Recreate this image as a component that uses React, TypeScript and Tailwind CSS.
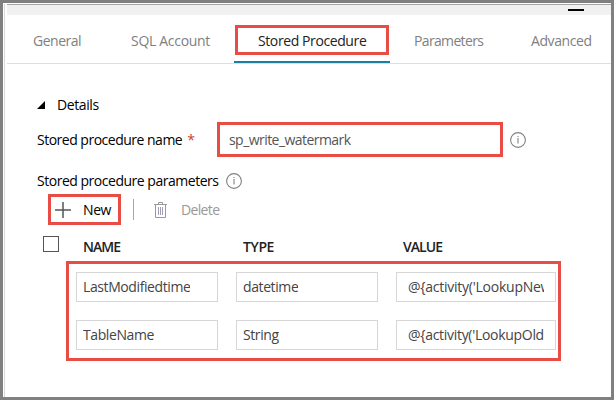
import React from 'react';

function InfoIcon() {
  return (
    <svg width="16" height="16" viewBox="0 0 16 16" className="shrink-0" fill="none">
      <circle cx="8" cy="8" r="7.4" stroke="#808080" strokeWidth="1.1" />
      <path d="M8 6V11.5" stroke="#8c8c8c" strokeWidth="1.2" />
      <path d="M8 4V5" stroke="#8c8c8c" strokeWidth="1.2" />
    </svg>
  );
}

function TrashIcon() {
  return (
    <svg width="13" height="16" viewBox="0 0 13 16" className="shrink-0" fill="none" stroke="#999">
      <path d="M0 2.5H13M4.5 2V.5H8.5V2M1.5 2.5V15.5H11.5V2.5" />
      <path d="M4.5 5V13M6.5 5V13M8.5 5V13" stroke="#a0a0b4" />
    </svg>
  );
}

function Tab({ label, className }: { label: string; className: string }) {
  return <div className={`flex h-[48px] items-center pt-[3px] text-[#808080] ${className}`}>{label}</div>;
}

function Field({ text, className }: { text: string; className: string }) {
  return (
    <div className={`flex h-[30px] items-center border border-[#d6d6d6] text-[#444] ${className}`}>
      <span className="overflow-hidden whitespace-nowrap">{text}</span>
    </div>
  );
}

export default function App() {
  return (
    <div className="h-[400px] w-[614px] overflow-hidden border-3 border-[#808080] bg-white pt-px pl-px font-['Open_Sans','Noto_Sans',sans-serif] text-[14px] leading-5 tracking-[-0.4px] whitespace-nowrap text-black">
      <div className="h-full border-l border-[#d9d9d9] pl-[2px]">
        <div className="flex h-[11px] justify-end border-t border-[#a6a6a6] bg-[#f1f1f1] pt-[4px] pr-[27px]">
          <div className="h-[2px] w-4 bg-black" />
        </div>
        <nav className="flex h-[49px] border-b border-[#dedede]">
          <Tab label="General" className="w-[98px] pl-[26px] tracking-[-0.5px]" />
          <Tab label="SQL Account" className="w-[129px] pl-[26px] tracking-[-0.3px]" />
          <div className="h-[48px] w-[156px] border-b-2 border-[#1b7fa0] px-px pt-[10px]">
            <div className="flex h-[30px] items-center border-3 border-[#e94b45] pt-px pl-[20px] text-[#222]">Stored Procedure</div>
          </div>
          <Tab label="Parameters" className="w-[116px] pl-[24px] tracking-[-0.65px]" />
          <Tab label="Advanced" className="pl-[25px]" />
        </nav>

        <div className="mt-[31px] flex h-5 items-center pl-[30px]">
          <svg width="8" height="8" viewBox="0 0 8 8" className="mr-[12px]"><path d="M8 0V8H0Z" /></svg>
          Details
        </div>

        <div className="mt-[7px] flex h-[35px] items-center pl-[30px]">
          <div className="w-[180px] tracking-[-0.5px]">Stored procedure name <span className="ml-[2px] text-[#c9442d]">*</span></div>
          <div className="mr-[7px] flex h-[35px] w-[286px] items-center border-3 border-[#e94b45] pl-[9px] tracking-[-0.55px] text-[#555]">sp_write_watermark</div>
          <InfoIcon />
        </div>

        <div className="mt-[14px] flex h-5 items-center pl-[30px]">
          <div className="w-[188.5px] tracking-[-0.48px]">Stored procedure parameters</div>
          <InfoIcon />
        </div>

        <div className="mt-[3px] flex h-[31px] items-center pl-[41px]">
          <div className="flex h-[31px] w-[73px] items-center border-3 border-[#e94b45] pl-[4px]">
            <svg width="16" height="16" viewBox="0 0 16 16" className="mr-[12px] shrink-0" stroke="#555" strokeWidth="1.5"><path d="M8 0V16M0 8H16" /></svg>
            New
          </div>
          <div className="ml-[12px] h-[21px] w-px bg-[#a6a6a6]" />
          <div className="ml-[20px] flex items-center gap-[14px] tracking-[-0.65px] text-[#999]"><TrashIcon />Delete</div>
        </div>

        <div className="mt-[11px] flex h-[16px] items-center pl-[36px] font-semibold tracking-[-0.95px] text-[#222]">
          <div className="mr-[24px] size-4 border border-[#555]" />
          <div className="w-[160px] pt-[5px]">NAME</div>
          <div className="w-[160px] pt-[5px] tracking-[-0.4px]">TYPE</div>
          <div className="pt-[5px]">VALUE</div>
        </div>

        <div className="mt-[9px] ml-[59px] flex h-[100px] w-[495px] flex-col gap-[18px] border-3 border-[#e94b45] pt-[8px] pl-[7px]">
          <div className="flex gap-[18px]">
            <Field text="LastModifiedtime" className="w-[142px] px-[6px]" />
            <Field text="datetime" className="w-[142px] px-[6px]" />
            <Field text="@{activity('LookupNew" className="w-[160px] pr-[11px] pl-[11px] tracking-[-0.25px]" />
          </div>
          <div className="flex gap-[18px]">
            <Field text="TableName" className="w-[142px] px-[6px]" />
            <Field text="String" className="w-[142px] px-[6px]" />
            <Field text="@{activity('LookupOld" className="w-[160px] pr-[11px] pl-[11px] tracking-[-0.3px]" />
          </div>
        </div>
      </div>
    </div>
  );
}
